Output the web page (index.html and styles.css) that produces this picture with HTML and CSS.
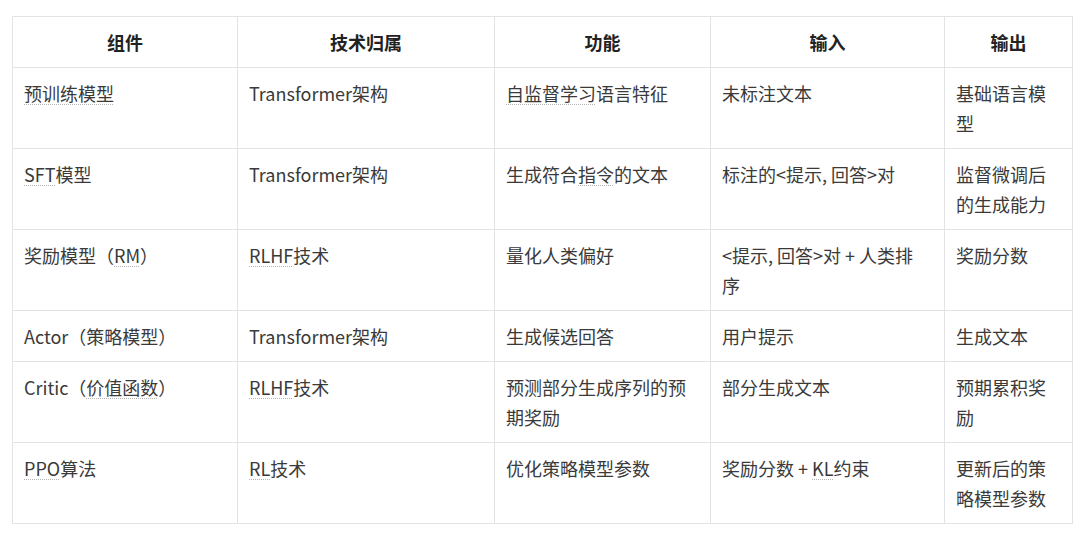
FILE: index.html
```html
<!DOCTYPE html>
<html lang="zh-CN">
<head>
<meta charset="utf-8">
<title>组件表</title>
<link rel="stylesheet" href="styles.css">
</head>
<body>
<div class="wrap">
<table class="grid">
  <colgroup>
    <col class="c1"><col class="c2"><col class="c3"><col class="c4"><col class="c5">
  </colgroup>
  <thead>
    <tr><th>组件</th><th>技术归属</th><th>功能</th><th>输入</th><th>输出</th></tr>
  </thead>
  <tbody>
    <tr>
      <td><span class="term">预训练模型</span></td>
      <td>Transformer架构</td>
      <td><span class="term">自监督学习</span>语言特征</td>
      <td>未标注文本</td>
      <td>基础语言模型</td>
    </tr>
    <tr>
      <td><span class="term">SFT</span>模型</td>
      <td>Transformer架构</td>
      <td>生成符合<span class="term">指令</span>的文本</td>
      <td>标注的&lt;提示, 回答&gt;对</td>
      <td>监督微调后的生成能力</td>
    </tr>
    <tr>
      <td>奖励模型（<span class="term">RM</span>）</td>
      <td><span class="term">RLHF</span>技术</td>
      <td>量化人类偏好</td>
      <td>&lt;提示, 回答&gt;对 + 人类排序</td>
      <td>奖励分数</td>
    </tr>
    <tr>
      <td>Actor（策略模型）</td>
      <td>Transformer架构</td>
      <td>生成候选回答</td>
      <td>用户提示</td>
      <td>生成文本</td>
    </tr>
    <tr>
      <td>Critic（<span class="term">价值函数</span>）</td>
      <td><span class="term">RLHF</span>技术</td>
      <td>预测部分生成序列的预期奖励</td>
      <td>部分生成文本</td>
      <td>预期累积奖励</td>
    </tr>
    <tr>
      <td><span class="term">PPO</span>算法</td>
      <td><span class="term">RL</span>技术</td>
      <td>优化策略模型参数</td>
      <td>奖励分数 + <span class="term">KL</span>约束</td>
      <td>更新后的策略模型参数</td>
    </tr>
  </tbody>
</table>
</div>
</body>
</html>
```
FILE: styles.css
```css
html, body {
  margin: 0;
  padding: 0;
  background: #ffffff;
}
body {
  font-family: "Noto Sans CJK SC", "Noto Sans", sans-serif;
  color: #3a3a3a;
  font-size: 18px;
}
.wrap {
  padding: 16px 8px 0 12px;
}
.grid {
  border-collapse: collapse;
  table-layout: fixed;
  width: 1060px;
}
.c1 { width: 225px; }
.c2 { width: 257px; }
.c3 { width: 216px; }
.c4 { width: 234px; }
.c5 { width: 128px; }
.grid th,
.grid td {
  border: 1px solid #e3e3e7;
  padding: 10px 14px 10px 11px;
  line-height: 30px;
  vertical-align: top;
  text-align: left;
  word-break: break-all;
}
.grid th {
  padding: 10px 12px;
  text-align: center;
  font-weight: 700;
  color: #222222;
}
.term {
  text-decoration: underline dotted #b4b4b4;
  text-decoration-thickness: 1px;
  text-underline-offset: 3px;
}
```
